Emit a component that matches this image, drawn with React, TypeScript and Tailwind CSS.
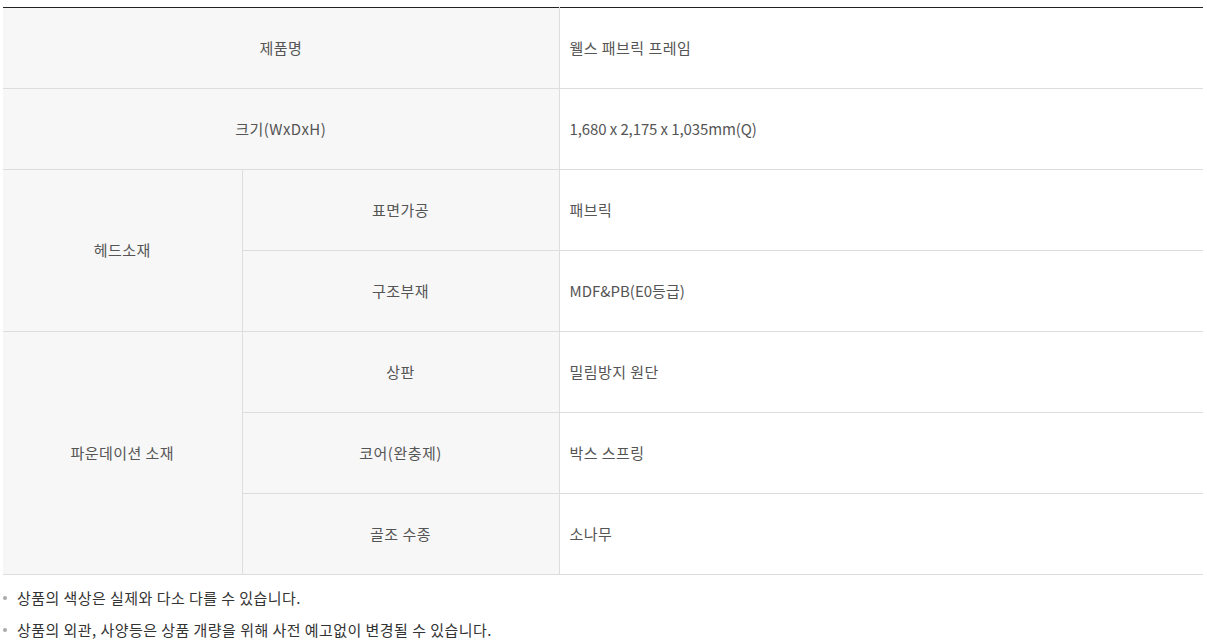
import React from "react";

const font = { fontFamily: '"Noto Sans CJK KR", "Noto Sans", sans-serif' };

const th = "bg-[#f7f7f7] text-center text-[15px] tracking-[0.45px] text-[#555] font-normal border border-[#dddddd] h-[81px] p-0";
const td = "bg-white text-left text-[15px] tracking-[0.45px] text-[#555] font-normal border border-[#dddddd] h-[81px] pl-[10px] py-0";

export default function App() {
  return (
    <div className="bg-white w-[1207px] h-[643px] pt-[7px] pl-[3px]" style={font}>
      <table className="w-[1200px] border-collapse table-fixed border-t border-t-[#222]">
        <colgroup>
          <col className="w-[239px]" />
          <col className="w-[317px]" />
          <col />
        </colgroup>
        <tbody>
          <tr>
            <th colSpan={2} className={th + " border-l-0 border-t-[#222]"}>제품명</th>
            <td className={td + " border-r-0 border-t-[#222]"}>웰스 패브릭 프레임</td>
          </tr>
          <tr>
            <th colSpan={2} className={th + " border-l-0"}>크기(WxDxH)</th>
            <td className={td + " border-r-0"}>
              <span className="tracking-[-0.1px]">1,680 x 2,175 x 1,035mm(Q)</span>
            </td>
          </tr>
          <tr>
            <th rowSpan={2} className={th + " border-l-0"}>헤드소재</th>
            <th className={th}>표면가공</th>
            <td className={td + " border-r-0"}>패브릭</td>
          </tr>
          <tr>
            <th className={th}>구조부재</th>
            <td className={td + " border-r-0"}>
              <span className="tracking-[0px]">MDF&amp;PB(E0등급)</span>
            </td>
          </tr>
          <tr>
            <th rowSpan={3} className={th + " border-l-0"}>파운데이션 소재</th>
            <th className={th}>상판</th>
            <td className={td + " border-r-0"}>밀림방지 원단</td>
          </tr>
          <tr>
            <th className={th}>코어(완충제)</th>
            <td className={td + " border-r-0"}>박스 스프링</td>
          </tr>
          <tr>
            <th className={th}>골조 수종</th>
            <td className={td + " border-r-0"}>소나무</td>
          </tr>
        </tbody>
      </table>
      <ul className="mt-[12px] flex flex-col gap-[11px] text-[15px] tracking-[0.45px] text-[#333]">
        {[
          "상품의 색상은 실제와 다소 다를 수 있습니다.",
          "상품의 외관, 사양등은 상품 개량을 위해 사전 예고없이 변경될 수 있습니다.",
        ].map((t) => (
          <li key={t} className="flex items-center h-[21px] leading-[21px]">
            <span className="w-[4px] h-[4px] rounded-full bg-[#aaa] ml-[0px] mr-[10px]" />
            <span>{t}</span>
          </li>
        ))}
      </ul>
    </div>
  );
}
